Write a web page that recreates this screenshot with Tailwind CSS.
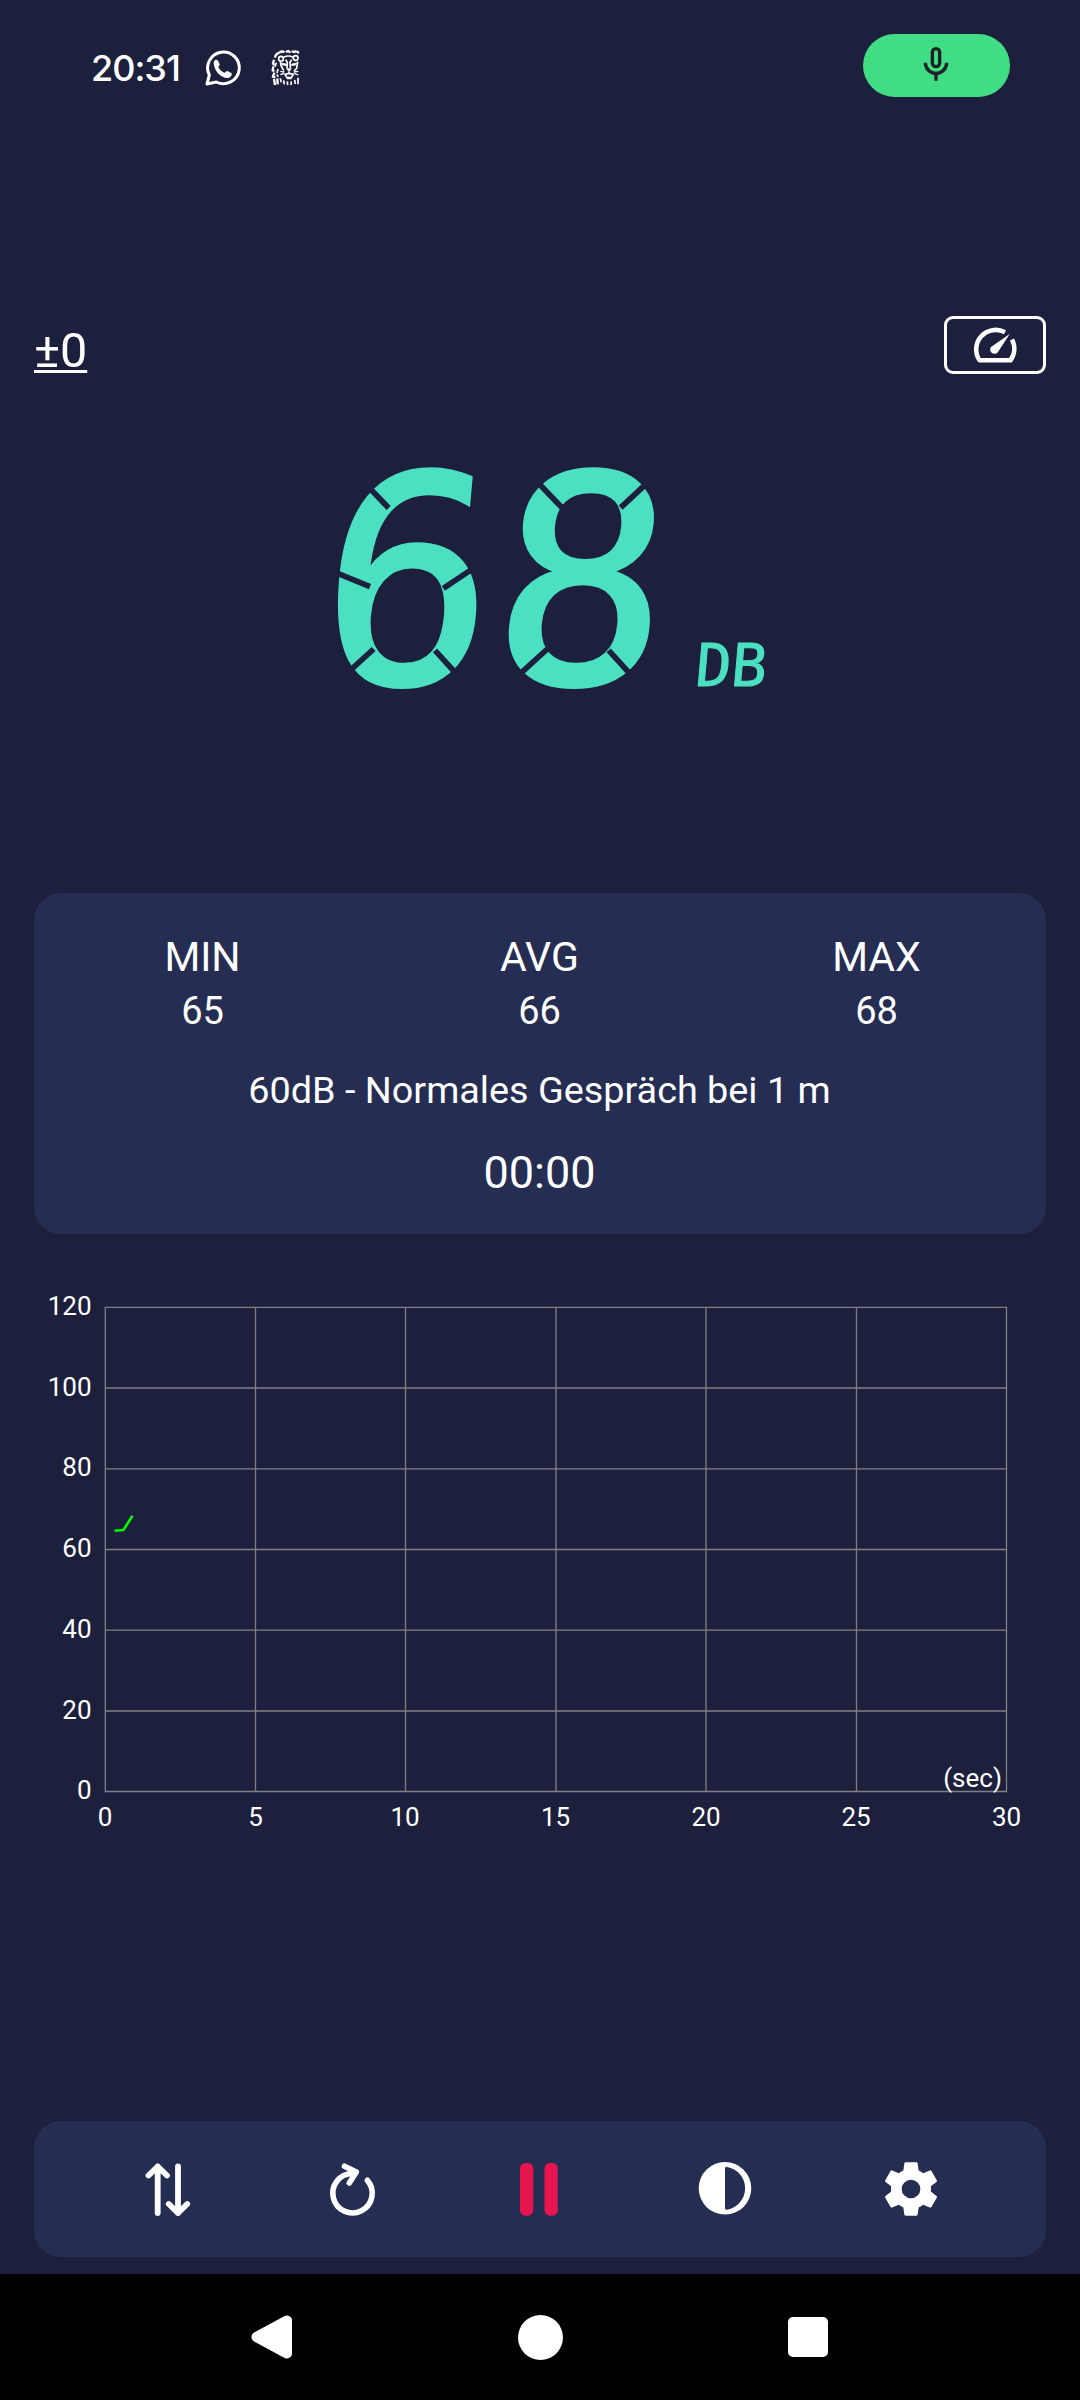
<!DOCTYPE html>
<html lang="de">
  <head>
    <meta charset="utf-8" />
    <meta name="viewport" content="width=device-width, initial-scale=1" />
    <title>Schallmessung</title>
    <script src="https://cdn.jsdelivr.net/npm/@tailwindcss/browser@4"></script>
  </head>

  <body class="bg-[#1d203c] text-white font-[Roboto,sans-serif]">
    <div class="flex flex-col w-[1080px] h-[2400px] overflow-hidden">
      <!-- status bar -->
      <header class="flex items-center justify-between h-[131px] pl-[91px] pr-[70px] shrink-0">
        <div class="flex items-center pt-1">
          <span class="w-[112px] text-[36px] leading-[42px] font-medium tracking-[-1px] font-[Inter,sans-serif]">20:31</span>
          <svg class="w-10 h-10" viewBox="430 84 120 120" fill="none">
            <path d="M442 192L449 165A47.500 47.500 0 1 1 470 186Z" stroke="#fff" stroke-width="9" stroke-linejoin="round" />
            <path d="M463 124c2-6 10-6 12-2l5 11c1 3-4 7-4 9 4 8 10 13 18 16 3 1 6-6 9-5l12 6c3 2 1 9-3 12-10 7-25 0-35-9-9-9-17-25-14-38z" fill="#fff" />
          </svg>
          <svg class="w-[30px] h-[38px] ml-[28px]" viewBox="636 92 90 114" fill="none" stroke="#fff" stroke-width="7">
            <path d="M648 118q2-12 14-15M662 102q8-5 14 0M680 101l8-3 6 5M698 99l8 2 6-3M712 99l8 5" />
            <path d="M645 124l-3 12 5 4M643 144l-2 12 5 3M646 163l-4 12 7 2M645 182l3 18M655 180l1 18" />
            <path d="M657 152l-3 12M654 168l3 8M652 133l-4 12" stroke-width="5" />
            <circle cx="666" cy="121" r="7" stroke-width="5" />
            <circle cx="710" cy="119" r="7" stroke-width="5" />
            <path d="M674 117q14-8 28 0M664 130q2 18 11 26M716 130l-3 20-8 8M680 124l5 8-1 18M698 124l-5 8 1 18" stroke-width="5" />
            <path d="M668 134l14 3v5l-12-2zM713 134l-15 3v5l12-2z" fill="#fff" stroke-width="2" />
            <path d="M683 151h14l-7 9z" fill="#fff" stroke-width="2" />
            <path d="M690 160v6M678 168q12-3 12-3t13 3l-6 10h-13z" stroke-width="5" />
            <path d="M664 159l12 2M664 169l11-4M704 161l14-2M706 165l12 5M684 181h14" stroke-width="4" />
            <path d="M664 180l3 12M674 186l2 12M685 189l1 11M697 189l-1 11M707 185l2 12M717 178v20" stroke-width="5" />
          </svg>
        </div>
        <div class="flex items-center justify-center w-[147px] h-[63px] rounded-full bg-[#40dd85]">
          <svg class="w-[26px] h-[36px] mb-[3px] mr-px" viewBox="249 79 78 108" fill="none" stroke="#202126" stroke-width="10">
            <rect x="277" y="87" width="22" height="54" rx="11" />
            <path d="M256 129a32 32 0 0 0 64 0M288 161v22" />
          </svg>
        </div>
      </header>

      <!-- calibration offset + view switch -->
      <div class="flex justify-between mt-[185px] px-[34px] h-[60px] shrink-0">
        <a class="text-[48.500px] leading-[56px] mt-[7px] underline decoration-[3px] underline-offset-[3px] [text-decoration-skip-ink:none]">±0</a>
        <div class="w-[102px] h-[58px] border-3 border-white rounded-[9px]">
          <svg class="w-24 h-[52px]" viewBox="27 19 96 52" fill="none" stroke="#fff" stroke-width="4.600">
            <path d="M85 32.300A19.500 19.500 0 0 0 59.500 60.300H90.500A19.700 19.700 0 0 0 92 39.500" stroke-linejoin="round" />
            <path d="M89.700 34L78 52a4.300 4.300 0 0 1-7-5z" fill="#fff" stroke="none" />
          </svg>
        </div>
      </div>

      <!-- current level -->
      <div class="relative flex items-baseline h-[345px] mt-[35px] pl-[322px] mb-[137px] shrink-0 text-[#4be0c2] font-['DejaVu_Sans_Mono',monospace]">
        <span class="text-[288px] leading-[345px] tracking-[1px] -skew-x-5 [-webkit-text-stroke:4px_#4be0c2]">68</span>
        <span class="text-[59px] leading-[60px] ml-[25px] translate-y-[3px] -skew-x-5 [-webkit-text-stroke:1px_#4be0c2]">DB</span>
        <!-- gaps between the display segments -->
        <svg class="absolute left-[320px] top-[44px] w-[460px] h-[250px]" viewBox="0 0 1380 750" fill="none" stroke="#1d203c" stroke-width="17">
          <path d="M90 38L206 159M40 350L150 395M38 694L161 582M345 586L445 696M475 330L370 400" />
          <path d="M611 38L727 159M1022 46L902 158M559 694L682 582M866 586L966 696" />
        </svg>
      </div>

      <!-- statistics -->
      <section class="mx-[34px] h-[341px] rounded-[27px] bg-[#252d53] pt-[40px] text-center shrink-0">
        <div class="grid grid-cols-3 pr-px">
          <div>
            <div class="text-[41px] leading-[48px]">MIN</div>
            <div class="text-[38px] leading-[44px] mt-[8px]">65</div>
          </div>
          <div>
            <div class="text-[41px] leading-[48px]">AVG</div>
            <div class="text-[38px] leading-[44px] mt-[8px]">66</div>
          </div>
          <div>
            <div class="text-[41px] leading-[48px]">MAX</div>
            <div class="text-[38px] leading-[44px] mt-[8px]">68</div>
          </div>
        </div>
        <div class="text-[37.800px] leading-[44px] mt-[35px] pr-px">60dB - Normales Gespräch bei 1 m</div>
        <div class="text-[45px] leading-[52px] mt-[35px] pr-px">00:00</div>
      </section>

      <!-- history chart -->
      <svg class="w-[1080px] h-[600px] shrink-0" viewBox="0 1234 1080 600" fill="none">
        <g stroke="#808084" stroke-width="1.300">
          <path d="M105 1388H1006.500M105 1468.800H1006.500M105 1549.500H1006.500M105 1630.200H1006.500M105 1711H1006.500" />
          <path d="M255.500 1307V1791.500M405.500 1307V1791.500M556 1307V1791.500M706 1307V1791.500M856.500 1307V1791.500" />
          <path d="M105.300 1307.300H1006.500V1791.500H105.300Z" />
        </g>
        <path d="M114.500 1530.800L123.300 1530.100L132.500 1515.800" stroke="#0f0" stroke-width="2.600" />
        <g class="text-[26px]" fill="#fff" text-anchor="end">
          <text x="91.500" y="1315">120</text>
          <text x="91.500" y="1396">100</text>
          <text x="91.500" y="1476">80</text>
          <text x="91.500" y="1557">60</text>
          <text x="91.500" y="1638">40</text>
          <text x="91.500" y="1719">20</text>
          <text x="91.500" y="1799">0</text>
          <text x="1002" y="1787">(sec)</text>
        </g>
        <g class="text-[26px]" fill="#fff" text-anchor="middle">
          <text x="105" y="1826">0</text>
          <text x="255.500" y="1826">5</text>
          <text x="405" y="1826">10</text>
          <text x="555.500" y="1826">15</text>
          <text x="706" y="1826">20</text>
          <text x="856" y="1826">25</text>
          <text x="1006.500" y="1826">30</text>
        </g>
      </svg>

      <!-- toolbar -->
      <div class="grid grid-cols-5 items-center justify-items-center mt-auto mb-[17px] mx-[34px] pl-[40px] pr-[42px] h-[136px] rounded-[27px] bg-[#252d53] shrink-0">
        <svg class="w-16 h-16" viewBox="0 0 64 64" fill="none" stroke="#fff" stroke-width="5.800" stroke-linecap="round" stroke-linejoin="round">
          <path d="M22.700 56V9.500M13.500 18.500L22.700 9.500L32 18.500" />
          <path d="M43 9.500V56M33.800 47L43 56L52.200 47" />
        </svg>
        <svg class="w-16 h-16" viewBox="0 0 64 64" fill="none" stroke="#fff" stroke-width="5.600" stroke-linecap="round" stroke-linejoin="round">
          <path d="M46.400 23.300A19.700 19.700 0 1 1 31.500 16.500" />
          <path d="M23.500 9.200L35.300 15L28.300 26" />
        </svg>
        <svg class="w-16 h-16" viewBox="0 0 64 64" fill="#e6154d">
          <rect x="13" y="6" width="13.300" height="52.700" rx="5.500" />
          <rect x="37.500" y="6" width="13.300" height="52.700" rx="5.500" />
        </svg>
        <svg class="w-16 h-16" viewBox="0 0 64 64" fill="#fff">
          <path fill-rule="evenodd" d="M32 5a26.300 26.300 0 0 0 0 52.600a26.300 26.300 0 0 0 0-52.600zM32 11.500q0-2 2-1.600a21.700 21.700 0 0 1 0 42.800q-2 .4-2-1.600z" />
        </svg>
        <svg class="w-16 h-16" viewBox="0 0 24 24" fill="#fff">
          <path d="M12,15.5A3.5,3.5 0 0,1 8.5,12A3.5,3.5 0 0,1 12,8.5A3.5,3.5 0 0,1 15.5,12A3.5,3.5 0 0,1 12,15.5M19.43,12.97C19.47,12.65 19.5,12.33 19.5,12C19.5,11.67 19.47,11.34 19.43,11L21.54,9.37C21.73,9.22 21.78,8.95 21.66,8.73L19.66,5.27C19.54,5.05 19.27,4.96 19.05,5.05L16.56,6.05C16.04,5.66 15.5,5.32 14.87,5.07L14.5,2.42C14.46,2.18 14.25,2 14,2H10C9.75,2 9.54,2.18 9.5,2.42L9.13,5.07C8.5,5.32 7.96,5.66 7.44,6.05L4.95,5.05C4.73,4.96 4.46,5.05 4.34,5.27L2.34,8.73C2.21,8.95 2.27,9.22 2.46,9.37L4.57,11C4.53,11.34 4.5,11.67 4.5,12C4.5,12.33 4.53,12.65 4.57,12.97L2.46,14.63C2.27,14.78 2.21,15.05 2.34,15.27L4.34,18.73C4.46,18.95 4.73,19.03 4.95,18.95L7.44,17.94C7.96,18.34 8.5,18.68 9.13,18.93L9.5,21.58C9.54,21.82 9.75,22 10,22H14C14.25,22 14.46,21.82 14.5,21.58L14.87,18.93C15.5,18.67 16.04,18.34 16.56,17.94L19.05,18.95C19.27,19.03 19.54,18.95 19.66,18.73L21.66,15.27C21.78,15.05 21.73,14.78 21.54,14.63L19.43,12.97Z" />
        </svg>
      </div>

      <!-- android navigation -->
      <nav class="bg-black h-[126px] px-[138px] grid grid-cols-3 items-center justify-items-center shrink-0">
        <svg class="w-[46px] h-[46px]" viewBox="0 0 46 46" fill="#fff" stroke="#fff" stroke-width="10" stroke-linejoin="round">
          <path d="M38 6.500V39.500L7.500 23Z" />
        </svg>
        <div class="w-[45px] h-[45px] rounded-full bg-white"></div>
        <div class="w-10 h-10 rounded-[5px] bg-white"></div>
      </nav>
    </div>
  </body>
</html>
